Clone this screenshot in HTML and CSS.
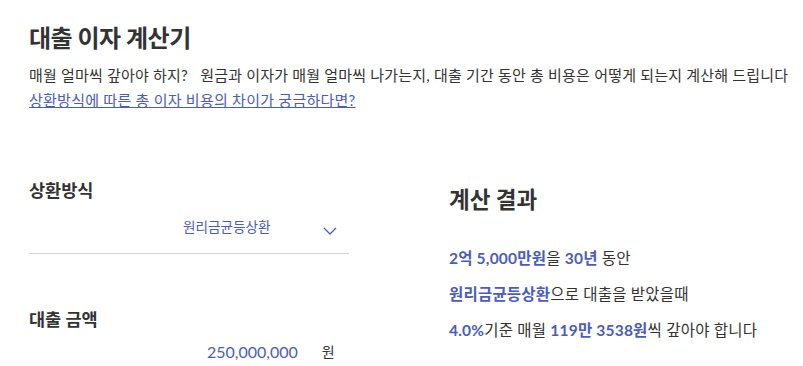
FILE: index.html
```html
<!DOCTYPE html>
<html lang="ko">

<head>
    <meta charset="UTF-8" />
    <meta name="viewport" content="width=device-width, initial-scale=1.0" />
    <title>대출 이자 계산기</title>
    <link rel="stylesheet" href="styles.css">
</head>

<body>
    <header class="intro">
        <h1>대출 이자 계산기</h1>
        <p>매월 얼마씩 갚아야 하지?&nbsp;&nbsp; 원금과 이자가 매월 얼마씩 나가는지, 대출 기간 동안 총 비용은 어떻게 되는지 계산해 드립니다</p>
        <a href="#" class="guide">상환방식에 따른 총 이자 비용의 차이가 궁금하다면?</a>
    </header>

    <main class="calc">
        <section class="inputs">
            <div class="field">
                <h2>상환방식</h2>
                <div class="select">
                    <span class="select-value">원리금균등상환</span>
                    <svg class="chevron" width="14" height="8" viewBox="0 0 14 8">
                        <path d="M1 1 L7 7 L13 1" fill="none" stroke="#4a5cc0" stroke-width="1.3" />
                    </svg>
                </div>
            </div>
            <div class="field">
                <h2>대출 금액</h2>
                <div class="amount">
                    <span class="num">250,000,000</span>
                    <span class="unit">원</span>
                </div>
            </div>
        </section>

        <section class="result">
            <h2>계산 결과</h2>
            <p><b>2억 5,000만원</b>을 <b>30년</b> 동안</p>
            <p><b>원리금균등상환</b>으로 대출을 받았을때</p>
            <p><b>4.0%</b>기준 매월 <b>119만 3538원</b>씩 갚아야 합니다</p>
        </section>
    </main>
</body>

</html>
```

FILE: styles.css
```css
body {
    margin: 0;
    padding: 0 0 0 29px;
    font-family: Lato, "Noto Sans CJK KR", sans-serif;
    color: #333;
    background: #fff;
}

.intro h1 {
    margin: 23px 0 0;
    font-size: 24px;
    font-weight: 700;
    line-height: 30px;
    letter-spacing: -0.5px;
}

.intro p {
    margin: 10px 0 0;
    font-size: 15px;
    line-height: 25px;
    letter-spacing: 0.2px;
    color: #333;
}

.guide {
    font-size: 15px;
    line-height: 25px;
    letter-spacing: 0.25px;
    color: #4a5cc0;
    text-decoration: underline;
}

.calc {
    display: flex;
    margin-top: 66px;
}

.inputs {
    width: 320px;
}

.field h2 {
    margin: 0;
    font-size: 17.5px;
    font-weight: 700;
    line-height: 24px;
}

.select {
    display: flex;
    align-items: center;
    height: 45px;
    border-bottom: 1px solid #d4d4d4;
    padding-bottom: 5px;
}

.select-value {
    margin-left: 154px;
    font-size: 13.6px;
    color: #4a5cc0;
}

.chevron {
    margin-left: 52px;
    margin-top: 10px;
}

.field + .field {
    margin-top: 54px;
}

.amount {
    display: flex;
    align-items: center;
    margin-top: 9px;
}

.amount .num {
    margin-left: 178px;
    font-size: 16px;
    color: #4a5cc0;
}

.amount .unit {
    margin-left: 24px;
    font-size: 14px;
}

.result {
    margin-left: 100px;
    padding-top: 6px;
}

.result h2 {
    margin: 0 0 25px;
    font-size: 22.5px;
    font-weight: 700;
    line-height: 30px;
}

.result p {
    margin: 0;
    font-size: 15.5px;
    line-height: 36px;
    letter-spacing: 0.2px;
}

.result b {
    color: #4a5cc0;
    font-weight: 700;
}
```
